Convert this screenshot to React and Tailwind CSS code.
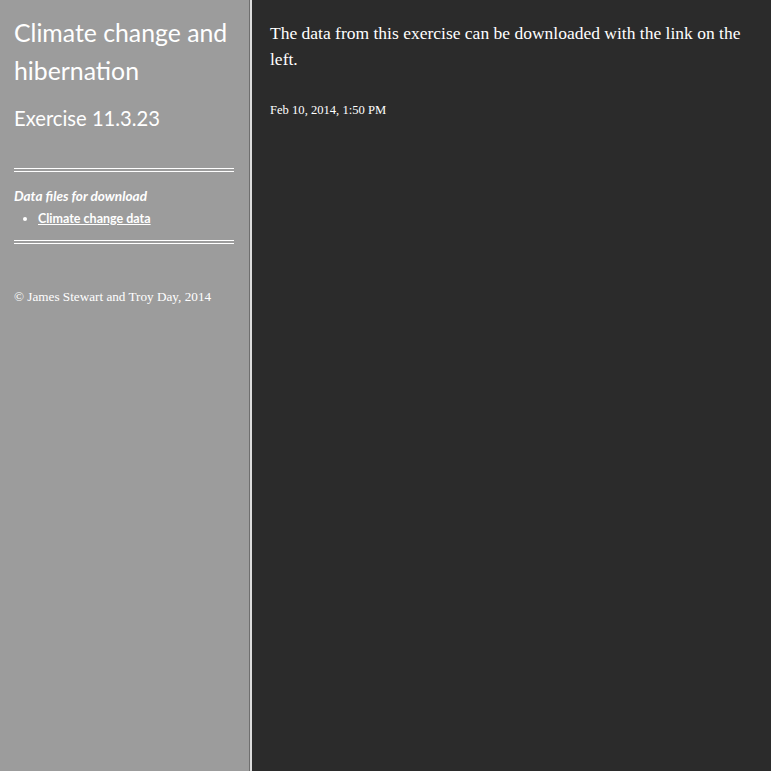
export default function App() {
  const sans = { fontFamily: "Lato, 'Open Sans', sans-serif" };
  const serif = { fontFamily: "'Liberation Serif', 'DejaVu Serif', serif" };
  return (
    <div className="flex h-[771px] w-[771px] overflow-hidden bg-[#2b2b2b]">
      {/* sidebar */}
      <aside className="w-[249px] shrink-0 bg-[#9c9c9c] pl-[14px] pr-[15px] pt-[14px] text-white" style={sans}>
        <h1 className="text-[24.8px] leading-[38px]">Climate change and hibernation</h1>
        <h2 className="mt-[14px] text-[20.2px] leading-[28px]">Exercise 11.3.23</h2>
        <div className="mt-[36px] flex flex-col gap-[2px]">
          <div className="h-px bg-white" />
          <div className="h-px bg-white" />
        </div>
        <p className="mt-[15px] text-[13.6px] font-bold italic leading-[18px]">Data files for download</p>
        <ul className="mt-[5px] pl-[24px] text-[12.5px] font-bold leading-[18px]">
          <li className="list-disc">
            <a href="#" className="underline">Climate change data</a>
          </li>
        </ul>
        <div className="mt-[12px] flex flex-col gap-[2px]">
          <div className="h-px bg-white" />
          <div className="h-px bg-white" />
        </div>
        <p className="mt-[44px] text-[13.2px] leading-[18px]" style={serif}>
          © James Stewart and Troy Day, 2014
        </p>
      </aside>
      <div className="w-px shrink-0 bg-[#6e6e6e]" />
      <div className="w-[2px] shrink-0 bg-[#dcdcdc]" />
      {/* main */}
      <main className="flex-1 pl-[18px] pr-[21px] pt-[20px] text-white" style={serif}>
        <p className="text-[17.5px] leading-[26px]">
          The data from this exercise can be downloaded with the link on the left.
        </p>
        <p className="mt-[30px] text-[12.6px] leading-[16px]">Feb 10, 2014, 1:50 PM</p>
      </main>
    </div>
  );
}
